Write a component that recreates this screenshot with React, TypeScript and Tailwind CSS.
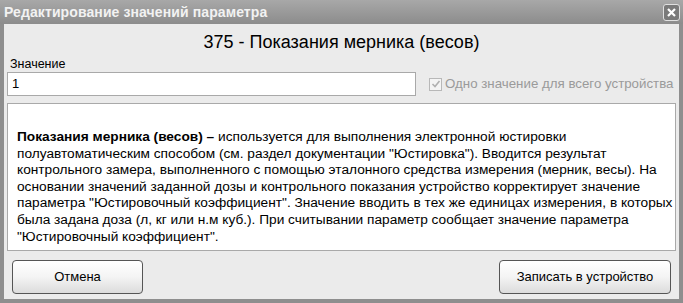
import React from "react";

const lines = [
  'используется для выполнения электронной юстировки',
  'полуавтоматическим способом (см. раздел документации "Юстировка"). Вводится результат',
  'контрольного замера, выполненного с помощью эталонного средства измерения (мерник, весы). На',
  'основании значений заданной дозы и контрольного показания устройство корректирует значение',
  'параметра "Юстировочный коэффициент". Значение вводить в тех же единицах измерения, в которых',
  'была задана доза (л, кг или н.м куб.). При считывании параметр сообщает значение параметра',
  '"Юстировочный коэффициент".',
];

export default function App() {
  return (
    <div
      className="w-[683px] h-[303px] flex flex-col bg-[#8e8e8e] overflow-hidden"
      style={{ fontFamily: '"Liberation Sans", Arial, sans-serif' }}
    >
      {/* title bar */}
      <div className="h-[24px] shrink-0 flex items-center justify-between pl-[4px] pr-[3px] bg-gradient-to-b from-[#a8a8a8] to-[#8c8c8c]">
        <span className="text-[14px] font-bold text-[#f2f2f2] tracking-[0.1px]">
          Редактирование значений параметра
        </span>
        <div className="w-[17px] h-[17px] rounded-[3px] border border-[#e0e0e0] bg-[#7a7a7a] flex items-center justify-center">
          <svg width="9" height="9" viewBox="0 0 9 9">
            <path d="M1 1 L8 8 M8 1 L1 8" stroke="#ffffff" strokeWidth="2.2" />
          </svg>
        </div>
      </div>
      {/* body */}
      <div className="flex-1 mx-[4px] mb-[4px] bg-[#ebebeb] flex flex-col px-[3px]">
        <div className="h-[34px] flex items-center justify-center text-[18px] text-black pt-[3px]">
          375 - Показания мерника (весов)
        </div>
        <div className="text-[12.5px] text-black pl-[3px] leading-[13px]">Значение</div>
        <div className="flex items-center mt-[1px] h-[24px]">
          <div className="w-[409px] h-[24px] bg-white border border-[#a9a9a9] flex items-center px-[4px] text-[13px] text-black">
            1
          </div>
          <div className="ml-[13px] flex items-center gap-[3px] whitespace-nowrap">
            <div className="w-[13px] h-[13px] shrink-0 border border-[#b8b8b8] bg-[#f4f4f4] flex items-center justify-center">
              <svg width="10" height="10" viewBox="0 0 10 10">
                <path d="M1.5 5 L4 7.5 L8.5 2" stroke="#b0b0b0" strokeWidth="1.6" fill="none" />
              </svg>
            </div>
            <span className="text-[13.3px] text-[#9a9a9a]">Одно значение для всего устройства</span>
          </div>
        </div>
        <div className="mt-[7px] h-[148px] bg-white border border-[#a9a9a9] pl-[9px] pt-[25px] text-[13.7px] leading-[16.6px] text-black whitespace-nowrap overflow-hidden">
          <div>
            <span className="font-bold">Показания мерника (весов) –</span> {lines[0]}
          </div>
          {lines.slice(1).map((l) => (
            <div key={l}>{l}</div>
          ))}
        </div>
        <div className="flex justify-between items-start pt-[9px] px-[5px]">
          <button className="w-[131px] h-[34px] rounded-[4px] border border-[#555] bg-gradient-to-b from-[#ffffff] via-[#f4f4f4] to-[#dcdcdc] text-[13px] text-black">
            Отмена
          </button>
          <button className="w-[172px] h-[34px] rounded-[4px] border border-[#555] bg-gradient-to-b from-[#ffffff] via-[#f4f4f4] to-[#dcdcdc] text-[13px] text-black">
            Записать в устройство
          </button>
        </div>
      </div>
    </div>
  );
}
